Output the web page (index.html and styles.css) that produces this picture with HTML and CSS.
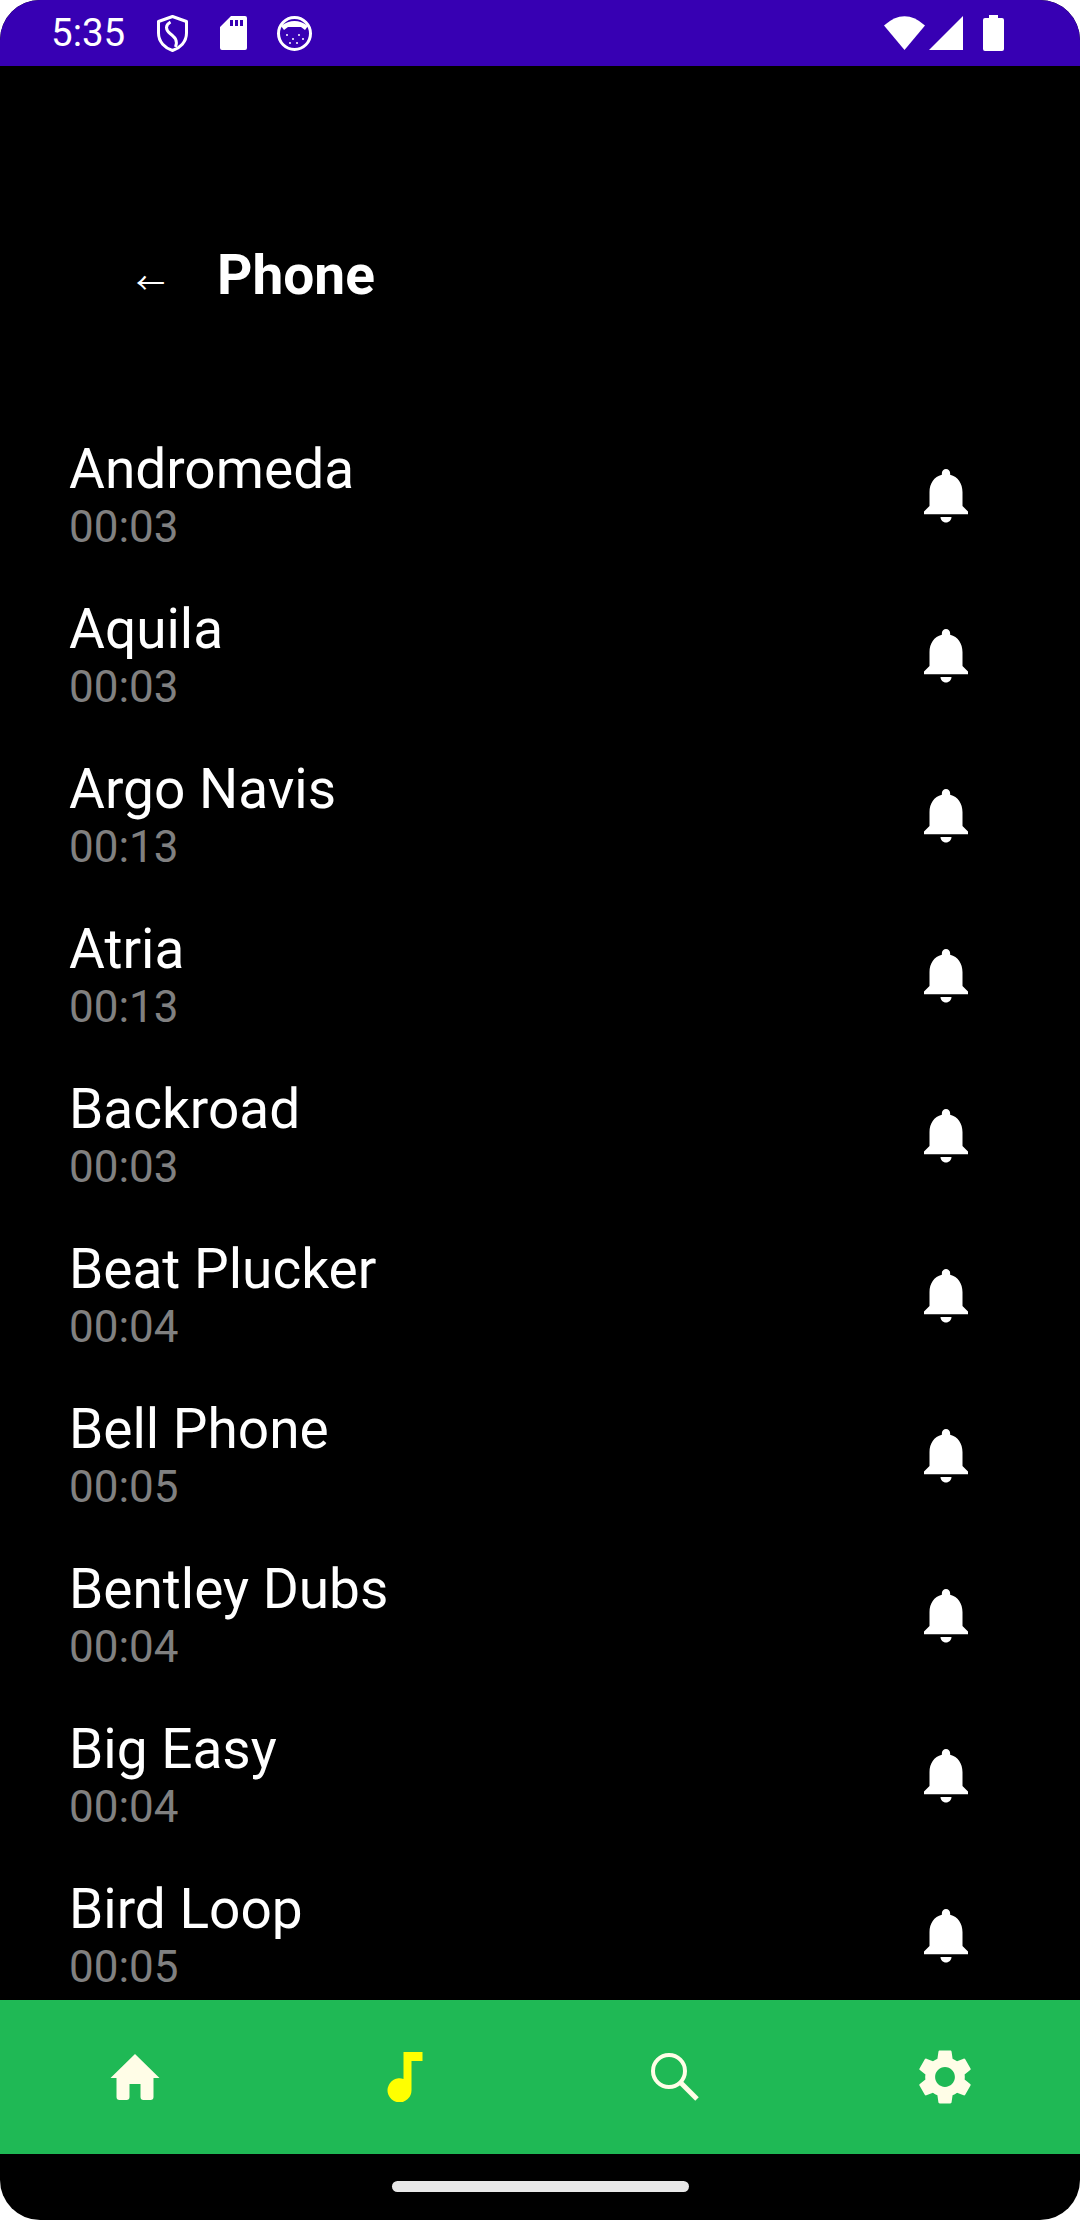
FILE: index.html
```html
<!DOCTYPE html>
<html lang="en">
<head>
    <meta charset="UTF-8">
    <title>Phone ringtones</title>
    <link rel="stylesheet" href="styles.css">
</head>
<body>
    <div class="phone">
        <div class="status-bar">
            <div class="status-left">
                <span class="time">5:35</span>
                <svg class="ic-shield" viewBox="0 0 31 37"><path d="M15.5 1.5 29.5 6.5V18C29.5 27 23 33 15.5 35.5 8 33 1.500 27 1.500 18V6.500Z" fill="none" stroke="#fff" stroke-width="3" stroke-linejoin="round"/><path d="M13.500 7C8 10 8.500 15 13 18.500 18 22.500 21 25 18.500 32" fill="none" stroke="#fff" stroke-width="3"/></svg>
                <svg class="ic-sd" viewBox="0 0 27 34"><path fill-rule="evenodd" d="M11 0H25Q27 0 27 2V32Q27 34 25 34H2Q0 34 0 32V11ZM10 4V10H13V4ZM15 4V10H18V4ZM20 4V10H23V4Z" fill="#fff"/></svg>
                <svg class="ic-cat" viewBox="0 0 35 35"><circle cx="17.500" cy="17.500" r="16" fill="none" stroke="#fff" stroke-width="3"/><path d="M4 10Q17.500 0 31 10L28 14 24 11H11L7 14Z" fill="#fff"/><g fill="#fff"><circle cx="10" cy="19" r="1"/><circle cx="16" cy="23" r="1"/><circle cx="22" cy="19" r="1"/><circle cx="26" cy="23" r="1"/><circle cx="13" cy="27" r="1"/><circle cx="20" cy="27" r="1"/></g></svg>
            </div>
            <div class="status-right">
                <svg class="ic-wifi" viewBox="0 0 41 34"><path d="M0 9.500Q20.500 -9 41 9.500L20.500 34Z" fill="#fff"/></svg>
                <svg class="ic-signal" viewBox="0 0 34 34"><path d="M34 0V34H0Z" fill="#fff"/></svg>
                <svg class="ic-battery" viewBox="0 0 21 36"><path d="M6 0H15V3H19Q21 3 21 5V34Q21 36 19 36H2Q0 36 0 34V5Q0 3 2 3H6Z" fill="#fff"/></svg>
            </div>
        </div>

        <div class="header">
            <span class="back">←</span>
            <h1 class="title">Phone</h1>
        </div>

        <div class="list">
            <div class="row">
                <div><div class="name">Andromeda</div><div class="length">00:03</div></div>
                <svg class="bell" viewBox="0 0 24 24"><use href="#bell-shape"/></svg>
            </div>
            <div class="row">
                <div><div class="name">Aquila</div><div class="length">00:03</div></div>
                <svg class="bell" viewBox="0 0 24 24"><use href="#bell-shape"/></svg>
            </div>
            <div class="row">
                <div><div class="name">Argo Navis</div><div class="length">00:13</div></div>
                <svg class="bell" viewBox="0 0 24 24"><use href="#bell-shape"/></svg>
            </div>
            <div class="row">
                <div><div class="name">Atria</div><div class="length">00:13</div></div>
                <svg class="bell" viewBox="0 0 24 24"><use href="#bell-shape"/></svg>
            </div>
            <div class="row">
                <div><div class="name">Backroad</div><div class="length">00:03</div></div>
                <svg class="bell" viewBox="0 0 24 24"><use href="#bell-shape"/></svg>
            </div>
            <div class="row">
                <div><div class="name">Beat Plucker</div><div class="length">00:04</div></div>
                <svg class="bell" viewBox="0 0 24 24"><use href="#bell-shape"/></svg>
            </div>
            <div class="row">
                <div><div class="name">Bell Phone</div><div class="length">00:05</div></div>
                <svg class="bell" viewBox="0 0 24 24"><use href="#bell-shape"/></svg>
            </div>
            <div class="row">
                <div><div class="name">Bentley Dubs</div><div class="length">00:04</div></div>
                <svg class="bell" viewBox="0 0 24 24"><use href="#bell-shape"/></svg>
            </div>
            <div class="row">
                <div><div class="name">Big Easy</div><div class="length">00:04</div></div>
                <svg class="bell" viewBox="0 0 24 24"><use href="#bell-shape"/></svg>
            </div>
            <div class="row">
                <div><div class="name">Bird Loop</div><div class="length">00:05</div></div>
                <svg class="bell" viewBox="0 0 24 24"><use href="#bell-shape"/></svg>
            </div>
        </div>

        <div class="bottom-nav">
            <div class="nav-item">
                <svg class="ic-home" viewBox="0 0 49 46"><path d="M24.500 0 49 24H43V43Q43 46 40 46H33Q30 46 30 43V30H19V43Q19 46 16 46H9Q6 46 6 43V24H0Z" fill="#fffde7"/></svg>
            </div>
            <div class="nav-item">
                <svg class="ic-note" viewBox="0 0 35 50"><path d="M16 0H35V9H24V38A12 12 0 1 1 16 27Z" fill="#ffff00"/></svg>
            </div>
            <div class="nav-item">
                <svg class="ic-search" viewBox="0 0 48 48"><circle cx="18" cy="18" r="16" fill="none" stroke="#fffde7" stroke-width="4"/><path d="M30 30 46 46" fill="none" stroke="#fffde7" stroke-width="5"/></svg>
            </div>
            <div class="nav-item">
                <svg class="ic-gear" viewBox="0 0 24 24"><path d="M19.140 12.940c.04-.3.060-.61.060-.94 0-.32-.020-.64-.070-.94l2.030-1.580c.18-.14.230-.41.120-.61l-1.920-3.320c-.12-.22-.37-.29-.59-.22l-2.390.96c-.5-.38-1.030-.7-1.620-.94l-.36-2.540c-.040-.24-.24-.41-.48-.41h-3.840c-.24 0-.43.17-.47.41l-.36 2.540c-.59.24-1.130.57-1.620.94l-2.390-.96c-.22-.08-.47 0-.59.22L2.740 8.870c-.12.21-.08.47.12.61l2.030 1.580c-.05.3-.09.63-.09.94s.02.64.07.94l-2.030 1.580c-.18.14-.23.41-.12.61l1.920 3.320c.12.22.37.29.59.22l2.390-.96c.5.38 1.030.7 1.620.94l.36 2.540c.05.24.24.41.48.41h3.840c.24 0 .44-.17.47-.41l.36-2.540c.59-.24 1.130-.56 1.620-.94l2.390.96c.22.08.47 0 .59-.22l1.920-3.320c.12-.22.07-.47-.12-.61l-2.010-1.580zM12 15.600c-1.980 0-3.600-1.620-3.600-3.600s1.620-3.600 3.600-3.600 3.600 1.620 3.600 3.600-1.620 3.600-3.600 3.600z" fill="#fffde7"/></svg>
            </div>
        </div>

        <div class="gesture-area">
            <div class="home-bar"></div>
        </div>

        <!-- bell used by every row -->
        <svg class="defs" width="0" height="0">
            <defs>
                <path id="bell-shape" d="M12 22c1.100 0 2-.9 2-2h-4c0 1.100.89 2 2 2zm6-6v-5c0-3.070-1.640-5.640-4.500-6.320V4c0-.83-.67-1.500-1.500-1.500s-1.500.67-1.500 1.500v.68C7.630 5.360 6 7.920 6 11v5l-2 2v1h16v-1l-2-2z" fill="#fff"/>
            </defs>
        </svg>
    </div>
</body>
</html>
```

FILE: styles.css
```css
html, body {
    margin: 0;
    background-color: #fff;
}

.phone {
    display: flex;
    flex-direction: column;
    width: 1080px;
    height: 2220px;
    overflow: hidden;
    background-color: #000;
    border-radius: 40px;
    color: #fff;
    font-family: Roboto, sans-serif;
}

.status-bar {
    display: flex;
    justify-content: space-between;
    align-items: center;
    flex: none;
    height: 66px;
    padding: 0 76px 0 51px;
    background-color: #3700b3;
}

.status-left, .status-right {
    display: flex;
    align-items: center;
}

.time {
    font-size: 38.5px;
    line-height: 66px;
    margin-right: 32px;
}

.ic-shield { width: 31px; height: 37px; margin-right: 32px; }
.ic-sd { width: 27px; height: 34px; margin-right: 30px; }
.ic-cat { width: 35px; height: 35px; }
.ic-wifi { width: 41px; height: 34px; margin-right: 4px; }
.ic-signal { width: 34px; height: 34px; margin-right: 20px; }
.ic-battery { width: 21px; height: 36px; }

.header {
    display: flex;
    align-items: baseline;
    flex: none;
    height: 349px;
    box-sizing: border-box;
    padding: 177px 0 0 136px;
}

.back {
    width: 81px;
    font-size: 29px;
    line-height: 64px;
    font-family: "Noto Sans CJK SC", sans-serif;
}

.title {
    margin: 0;
    font-size: 55px;
    font-weight: 700;
    line-height: 64px;
}

.list {
    flex: 1;
    min-height: 0;
    overflow: hidden;
}

.row {
    display: flex;
    justify-content: space-between;
    align-items: center;
    height: 160px;
    padding: 0 101px 0 69px;
}

.name {
    font-size: 55px;
    line-height: 64px;
}

.length {
    font-size: 44px;
    line-height: 52px;
    color: #808080;
}

.bell {
    width: 66px;
    height: 66px;
}

.bottom-nav {
    display: grid;
    grid-template-columns: repeat(4, 1fr);
    align-items: center;
    flex: none;
    height: 154px;
    background-color: #1fb955;
}

.nav-item {
    display: flex;
    justify-content: center;
}

.ic-home { width: 50px; height: 46px; }
.ic-note { width: 36px; height: 50px; }
.ic-search { width: 48px; height: 48px; }
.ic-gear { width: 66px; height: 66px; }

.gesture-area {
    display: flex;
    justify-content: center;
    flex: none;
    height: 66px;
    padding-top: 27px;
    box-sizing: border-box;
}

.home-bar {
    width: 297px;
    height: 11px;
    background-color: #e8e8e8;
    border-radius: 6px;
}

.defs {
    position: absolute;
    top: 0;
    left: 0;
}
```
